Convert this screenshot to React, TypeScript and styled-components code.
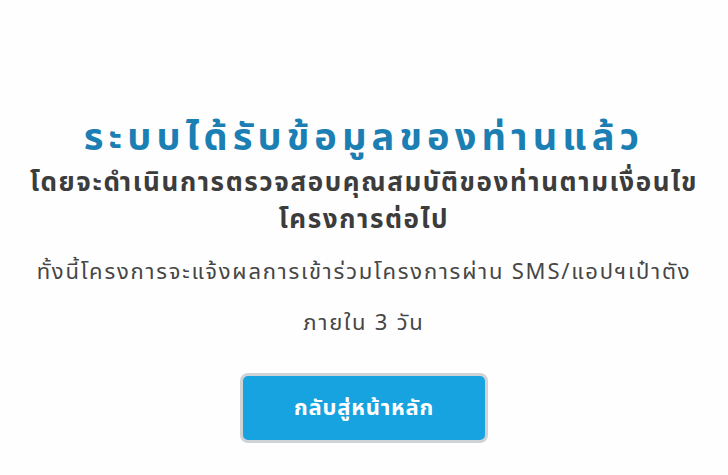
import React from "react";
import styled, { createGlobalStyle } from "styled-components";

const GlobalStyle = createGlobalStyle`
  html, body {
    margin: 0;
    padding: 0;
    background: #fefefe;
  }
  body {
    font-family: "Noto Sans Thai", "Noto Sans", "DejaVu Sans", sans-serif;
  }
`;

const Page = styled.div`
  width: 728px;
  height: 475px;
  display: flex;
  flex-direction: column;
  align-items: center;
  padding-top: 113px;
  box-sizing: border-box;
  overflow: hidden;
`;

const Title = styled.h1`
  margin: 0;
  font-size: 38px;
  line-height: 52px;
  font-weight: 700;
  color: #1b7fb4;
  letter-spacing: 5.1px;
  text-align: center;
  white-space: nowrap;
`;

const Subtitle = styled.h2`
  margin: 0;
  font-size: 26px;
  line-height: 37px;
  font-weight: 700;
  color: #3c3c3c;
  letter-spacing: 1.6px;
  text-align: center;
  white-space: nowrap;
`;

const Note = styled.p`
  margin: 8px 0 0;
  font-size: 22px;
  line-height: 51px;
  font-weight: 400;
  color: #464646;
  letter-spacing: 1.8px;
  text-align: center;
  white-space: nowrap;
`;

const HomeButton = styled.button`
  margin-top: 24px;
  width: 248px;
  height: 70px;
  border: 3px solid #cfd3d6;
  border-radius: 8px;
  background: #17a3e0;
  color: #ffffff;
  font-family: inherit;
  font-size: 22px;
  font-weight: 700;
  letter-spacing: 0.8px;
  cursor: pointer;
`;

export default function App() {
  return (
    <>
      <GlobalStyle />
      <Page>
        <Title>ระบบได้รับข้อมูลของท่านแล้ว</Title>
        <Subtitle>
          โดยจะดำเนินการตรวจสอบคุณสมบัติของท่านตามเงื่อนไข
          <br />
          โครงการต่อไป
        </Subtitle>
        <Note>
          ทั้งนี้โครงการจะแจ้งผลการเข้าร่วมโครงการผ่าน SMS/แอปฯเป๋าตัง
          <br />
          ภายใน 3 วัน
        </Note>
        <HomeButton>กลับสู่หน้าหลัก</HomeButton>
      </Page>
    </>
  );
}
